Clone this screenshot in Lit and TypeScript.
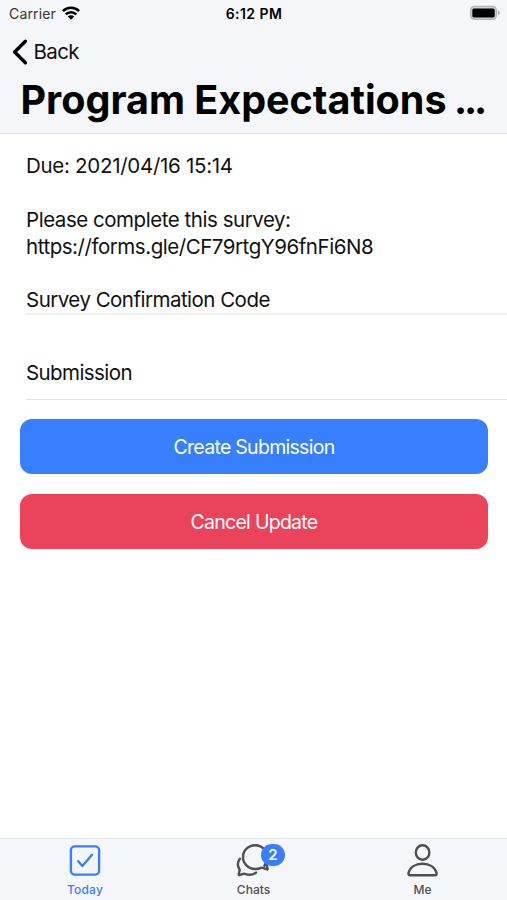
import { LitElement, html, css, svg } from "lit";
import { customElement } from "lit/decorators.js";

const wifiIcon = html`<svg class="wifi" viewBox="0 0 18 14" width="18" height="14">
  <g fill="none" stroke="#000" stroke-width="2.6">
    <path d="M0.9 5.1 A11.4 11.4 0 0 1 17.1 5.1" />
    <path d="M3.8 8.4 A7.3 7.3 0 0 1 14.2 8.4" />
  </g>
  <path d="M9 13.8 L5.8 10.6 A4.6 4.6 0 0 1 12.2 10.6 Z" fill="#000" />
</svg>`;

const batteryIcon = html`<svg viewBox="0 0 32 16" width="32" height="16">
  <rect x="1.6" y="1.4" width="25.8" height="13" rx="4" fill="#d0d1d4" stroke="#b2b3b6" stroke-width="1.3" />
  <rect x="3.3" y="3.5" width="22.4" height="8.9" rx="1.6" fill="#000" />
  <path d="M28.9 5.6 Q31 6.4 31 7.9 Q31 9.4 28.9 10.2 Z" fill="#acaeb1" />
</svg>`;

const backIcon = html`<svg viewBox="0 0 18 28" width="18" height="28">
  <path d="M14.4 3.2 L3.6 14 L14.4 24.8" fill="none" stroke="#000" stroke-width="3.4" stroke-linecap="round" stroke-linejoin="round" />
</svg>`;

const icons: Record<string, unknown> = {
  today: svg`<rect x="3.9" y="3.4" width="28.2" height="28.2" rx="3.8" />
    <path d="M11.2 18.2 L15.4 23 L25 11.8" />`,
  chats: svg`<path d="M28.4 22.7 C30 20.4 31.2 17.4 31.2 14.4 C31.2 7.4 25.8 2.2 19.2 2.2 C12.3 2.2 7 7.6 7 13.9 C7 20.4 12.2 26 19.2 26 C21 26 23.4 25.5 25 24.8 C25.6 24.6 26.2 24.6 26.7 24.8 L31 26.4 C31.6 26.6 31.9 26.2 31.7 25.6 L30.3 21" />
    <path d="M3.9 15.8 C1.5 19 1.4 23 3.4 26.1 C3.7 26.6 3.7 27 3.6 27.4 L2.7 31.3 C2.6 32 3 32.3 3.6 32.1 L7.2 30.8 C7.8 30.6 8.3 30.6 8.8 30.8 C12.3 32.2 17 31.9 20 29.6" />`,
  me: svg`<ellipse cx="17.6" cy="9.5" rx="6.8" ry="7.2" />
    <path d="M17.5 20.7 C10.5 20.7 4.9 24.2 3.5 30.1 C3.3 31.5 3.9 32.3 5 32.3 H30 C31.2 32.3 31.8 31.5 31.5 30.1 C30.1 24.2 24.5 20.7 17.5 20.7 Z" />`,
};

const tabs = [
  { id: "today", label: "Today", badge: 0 },
  { id: "chats", label: "Chats", badge: 2 },
  { id: "me", label: "Me", badge: 0 },
];

@customElement("app-root")
export class AppRoot extends LitElement {
  static styles = css`
    :host {
      display: flex;
      flex-direction: column;
      height: 900px;
      background: #fff;
      color: #111;
      font-family: Inter, "Liberation Sans", sans-serif;
      overflow: hidden;
    }
    * { box-sizing: border-box; }
    svg { display: block; flex: none; }
    header {
      height: 134px;
      flex: none;
      background: #f5f6fa;
      border-bottom: 1px solid #e6e7eb;
      color: #000;
    }
    .status {
      display: grid;
      grid-template-columns: 1fr auto 1fr;
      align-items: center;
      height: 27px;
      padding: 0 6px 0 9px;
      font-size: 14px;
    }
    .carrier { display: flex; align-items: center; gap: 6px; color: #333; letter-spacing: 0.15px; }
    .wifi { margin-top: -2px; }
    .time { font-weight: 600; font-size: 14px; letter-spacing: 0.45px; padding-right: 2px; }
    .battery { display: flex; justify-content: flex-end; margin-top: -1px; }
    .back {
      display: flex;
      align-items: center;
      height: 47px;
      padding: 2px 0 0 11px;
      gap: 4.5px;
      font-size: 20.5px;
      letter-spacing: -0.6px;
      color: #111;
    }
    h1 {
      margin: 0;
      padding: 0 20.5px;
      height: 52px;
      line-height: 52px;
      font-size: 39.5px;
      letter-spacing: 0;
      font-weight: 700;
      white-space: pre;
    }
    .ellipsis { letter-spacing: -3.2px; margin-left: -2px; }
    main { flex: 1; }
    .body { margin-left: 26px; white-space: nowrap; font-size: 20.5px; line-height: 26.8px; letter-spacing: -0.46px; }
    .details { padding-top: 19.4px; height: 181px; border-bottom: 2px solid #efefef; }
    .line { height: 26.8px; }
    .due { letter-spacing: -0.29px; }
    .code { letter-spacing: -0.52px; }
    .field { height: 85px; padding-top: 45px; border-bottom: 1px solid #e2e2e2; letter-spacing: -0.58px; }
    .actions { display: grid; gap: 20px; padding: 19px 19px 0 20px; }
    button {
      height: 55px;
      border: 0;
      border-radius: 12px;
      color: #fff;
      font: 400 19.5px Inter, "Liberation Sans", sans-serif;
      letter-spacing: -0.72px;
      background: #387fff;
    }
    .danger { background: #eb445a; }
    footer {
      display: grid;
      grid-template-columns: repeat(3, 1fr);
      height: 62px;
      flex: none;
      background: #f5f6fa;
      border-top: 1px solid #e2e3e6;
    }
    .tab {
      display: flex;
      flex-direction: column;
      align-items: center;
      padding-top: 4px;
      font-size: 12px;
      font-weight: 500;
      line-height: 17px;
      color: #4f4f50;
    }
    .today { color: #387fff; }
    .today span { letter-spacing: 0.2px; padding-left: 1px; }
    .icon { position: relative; height: 38px; }
    .icon svg { fill: none; stroke: currentColor; stroke-width: 2.4; stroke-linecap: round; stroke-linejoin: round; }
    .badge {
      position: absolute;
      left: 25px;
      top: 1px;
      width: 24px;
      height: 22px;
      border-radius: 11px;
      background: #387fff;
      color: #fff;
      font-size: 15px;
      font-weight: 600;
      line-height: 22px;
      text-align: center;
    }
  `;

  render() {
    return html`
      <header>
        <div class="status">
          <div class="carrier"><span>Carrier</span>${wifiIcon}</div>
          <div class="time">6:12 PM</div>
          <div class="battery">${batteryIcon}</div>
        </div>
        <div class="back">${backIcon}<span>Back</span></div>
        <h1>Program Expectations <span class="ellipsis">...</span></h1>
      </header>
      <main>
        <div class="body">
          <div class="details">
            <div class="line due">Due: 2021/04/16 15:14</div>
            <div class="line"></div>
            <div class="line please">Please complete this survey:</div>
            <div class="line link">https://forms.gle/CF79rtgY96fnFi6N8</div>
            <div class="line"></div>
            <div class="line code">Survey Confirmation Code</div>
          </div>
          <div class="field">Submission</div>
        </div>
        <div class="actions">
          <button class="create">Create Submission</button>
          <button class="danger">Cancel Update</button>
        </div>
      </main>
      <footer>
        ${tabs.map(
          (t) => html`<div class="tab ${t.id}">
            <div class="icon">
              <svg viewBox="0 0 35 35" width="35" height="35">${icons[t.id]}</svg>
              ${t.badge ? html`<span class="badge">${t.badge}</span>` : null}
            </div>
            <span>${t.label}</span>
          </div>`
        )}
      </footer>
    `;
  }
}
